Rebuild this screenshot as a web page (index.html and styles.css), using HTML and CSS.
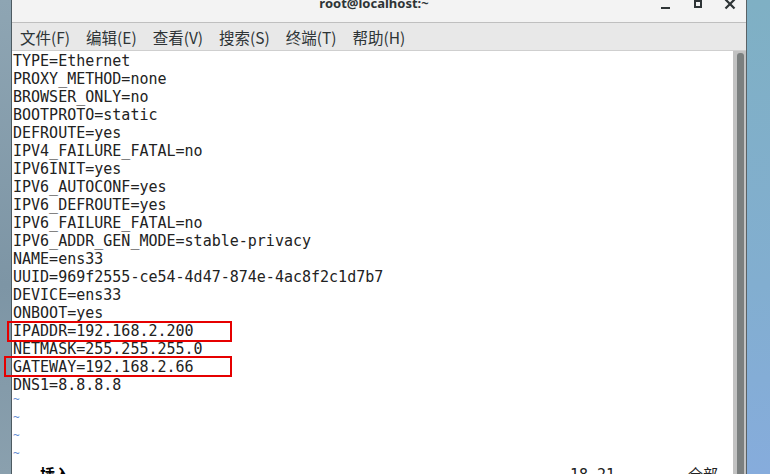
FILE: index.html
```html
<!DOCTYPE html>
<html lang="zh-CN">
<head>
<meta charset="UTF-8">
<title>root@localhost:~</title>
<link rel="stylesheet" href="styles.css">
</head>
<body>
<div class="desktop">
  <div class="desk-left"></div>
  <div class="window">
    <div class="titlebar">
      <span class="title">root@localhost:~</span>
      <div class="controls">
        <span class="btn btn-min"></span>
        <span class="btn btn-max"></span>
        <svg class="btn-close" width="12" height="12" viewBox="0 0 12 12"><path d="M1.5 1.5 L10.5 10.5 M10.5 1.5 L1.5 10.5" stroke="#2e3436" stroke-width="2.2"/></svg>
      </div>
    </div>
    <div class="menubar">
      <span class="menu">文件(F)</span>
      <span class="menu">编辑(E)</span>
      <span class="menu">查看(V)</span>
      <span class="menu">搜索(S)</span>
      <span class="menu">终端(T)</span>
      <span class="menu">帮助(H)</span>
    </div>
    <div class="term">
      <div class="screen">
        <div class="line">TYPE=Ethernet</div>
        <div class="line">PROXY_METHOD=none</div>
        <div class="line">BROWSER_ONLY=no</div>
        <div class="line">BOOTPROTO=static</div>
        <div class="line">DEFROUTE=yes</div>
        <div class="line">IPV4_FAILURE_FATAL=no</div>
        <div class="line">IPV6INIT=yes</div>
        <div class="line">IPV6_AUTOCONF=yes</div>
        <div class="line">IPV6_DEFROUTE=yes</div>
        <div class="line">IPV6_FAILURE_FATAL=no</div>
        <div class="line">IPV6_ADDR_GEN_MODE=stable-privacy</div>
        <div class="line">NAME=ens33</div>
        <div class="line">UUID=969f2555-ce54-4d47-874e-4ac8f2c1d7b7</div>
        <div class="line">DEVICE=ens33</div>
        <div class="line">ONBOOT=yes</div>
        <div class="line">IPADDR=192.168.2.200</div>
        <div class="line">NETMASK=255.255.255.0</div>
        <div class="line">GATEWAY=192.168.2.66</div>
        <div class="line">DNS1=8.8.8.8</div>
        <div class="line tilde">~</div>
        <div class="line tilde">~</div>
        <div class="line tilde">~</div>
        <div class="line tilde">~</div>
        <div class="line status"><span class="mode">-- 插入 --</span><span class="pos">18,21</span><span class="all">全部</span></div>
      </div>
      <div class="scrollbar"><div class="thumb"></div></div>
    </div>
  </div>
  <div class="desk-right"></div>
</div>
<div class="mark mark-ip"></div>
<div class="mark mark-gw"></div>
</body>
</html>
```

FILE: styles.css
```css
html, body { margin: 0; height: 100%; overflow: hidden; }
body { position: relative; font-family: "Noto Sans CJK SC", "DejaVu Sans", sans-serif; }

.desktop { display: flex; height: 474px; }
.desk-left { width: 11px; background: linear-gradient(180deg, #8ea5b3, #7d95a5 60%, #8aa0ae); }
.desk-right { flex: 1; background: linear-gradient(180deg, #7fb0c4, #82aed0 60%, #86acdc); }

.window { width: 734px; display: flex; flex-direction: column; border-left: 1px solid #4d5b62; border-right: 1px solid #5a6266; }

.titlebar { height: 22px; background: #f3f3f3; border-bottom: 1px solid #bfbfbf; position: relative; overflow: hidden; }
.title { display: block; text-align: center; font: bold 13px "Noto Sans", sans-serif; color: #2e3436; line-height: 14px; margin-top: -4px; padding-right: 10px; }
.controls { position: absolute; right: 10px; top: 0; display: flex; align-items: flex-start; gap: 22px; }
.btn { display: block; box-sizing: border-box; }
.btn-min { width: 9px; height: 2px; background: #2e3436; margin-top: 7px; margin-right: 2px; }
.btn-max { width: 8px; height: 8px; border: 2px solid #2e3436; }
.btn-close { margin-top: -2px; }

.menubar { height: 28px; background: #e8e8e8; border-bottom: 1px solid #cfcfcf; display: flex; align-items: center; box-sizing: border-box; }
.menu { font-size: 15.5px; color: #2e3436; padding: 0 8px; line-height: 28px; }

.term { flex: 1; display: flex; background: #fff; min-height: 0; }
.screen { flex: 1; padding: 1px 0 0 1px; font: 15px/18px "DejaVu Sans Mono", monospace; color: #222; overflow: hidden; }
.line { height: 18px; white-space: pre; }
.tilde { color: #5b87d0; font-size: 11px; line-height: 12px; }
.status { position: relative; }
.mode { font-weight: bold; color: #000; font-family: "DejaVu Sans Mono", "Noto Sans CJK SC", monospace; }
.pos { position: absolute; left: 557px; }
.all { position: absolute; left: 675px; }

.scrollbar { width: 13px; background: #c2c2c2; padding: 2px 2px 0 4px; box-sizing: border-box; }
.thumb { height: 100%; background: #7b7f7f; border-radius: 3px 3px 0 0; }

.mark { position: absolute; border: 2px solid #e60000; box-sizing: border-box; }
.mark-ip { left: 7px; top: 321px; width: 225px; height: 21px; }
.mark-gw { left: 4px; top: 356px; width: 228px; height: 21px; }
```
